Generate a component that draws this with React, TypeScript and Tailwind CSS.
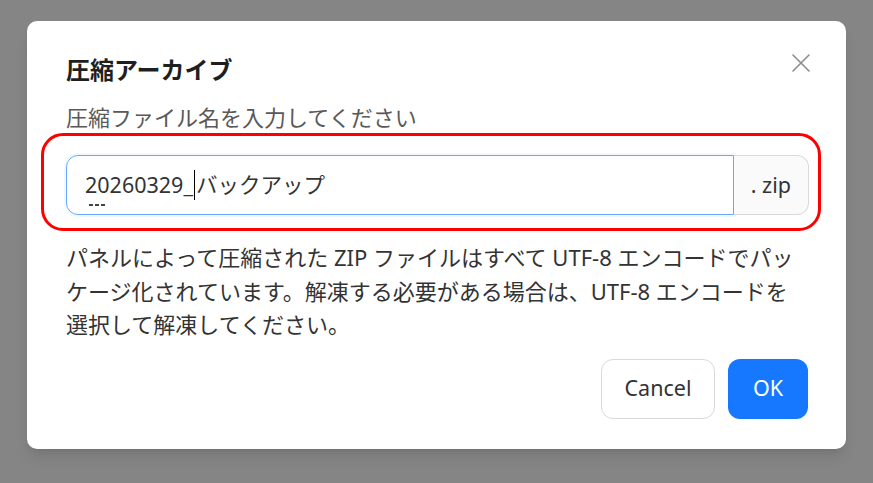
import React from "react";
import { X } from "lucide-react";

const font = "font-['Noto_Sans','Noto_Sans_CJK_JP',sans-serif]";

const ArchiveDialog: React.FC = () => {
    return (
        <div className={`relative w-[819px] rounded-[10px] bg-white pt-[31px] pb-[30px] pl-[39px] pr-[38px] shadow-lg ${font}`}>
            <button className="absolute right-[29px] top-[26px] text-[#8c8c8c]" aria-label="close">
                <X size={32} strokeWidth={1.2} />
            </button>

            <h2 className="text-[24px] font-bold leading-[36px] text-[#1f1f1f]">圧縮アーカイブ</h2>
            <p className="mt-[13px] text-[22px] leading-[32px] text-[#595959]">圧縮ファイル名を入力してください</p>

            {/* input with the red highlight */}
            <div className="relative mt-[22px] flex h-[60px] w-[743px]">
                <span className="pointer-events-none absolute -left-[25px] -right-[12px] -top-[22px] -bottom-[16px] rounded-[22px] border-[3px] border-[#ff0000]" />
                <div className="flex flex-1 items-center rounded-l-[12px] border border-[#69a8ff] pl-[18px] text-[21.5px] text-[#333] shadow-[0_0_0_2px_rgba(5,145,255,0.06)]">
                    <span className="relative">
                        20
                        <span className="absolute left-[4px] -bottom-[5px] flex gap-[2px]">
                            <span className="h-[2px] w-[4px] bg-[#444]" />
                            <span className="h-[2px] w-[4px] bg-[#444]" />
                            <span className="h-[2px] w-[4px] bg-[#444]" />
                        </span>
                    </span>
                    <span>260329_</span>
                    <span className="mx-[1px] inline-block h-[30px] w-[1px] bg-black" />
                    <span>バックアップ</span>
                </div>
                <div className="flex items-center rounded-r-[12px] border border-l-0 border-[#d9d9d9] bg-[#fafafa] px-[17px] text-[21.5px] text-[#333]">
                    . zip
                </div>
            </div>

            <p className="mt-[26px] text-[22px] leading-[33.5px] text-[#333]">
                パネルによって圧縮された ZIP ファイルはすべて UTF-8 エンコードでパッ
                <br />
                ケージ化されています。解凍する必要がある場合は、UTF-8 エンコードを
                <br />
                選択して解凍してください。
            </p>

            <div className="mt-[17px] flex justify-end gap-[13px]">
                <button className="h-[60px] w-[114px] rounded-[12px] border border-[#d9d9d9] bg-white text-[21.5px] text-[#333]">Cancel</button>
                <button className="h-[60px] w-[80px] rounded-[12px] bg-[#1677ff] text-[21.5px] text-white">OK</button>
            </div>
        </div>
    );
};

export default function App() {
    return (
        <div className="flex h-[483px] w-full items-start justify-center bg-[#858585] pt-[21px]">
            <ArchiveDialog />
        </div>
    );
}
